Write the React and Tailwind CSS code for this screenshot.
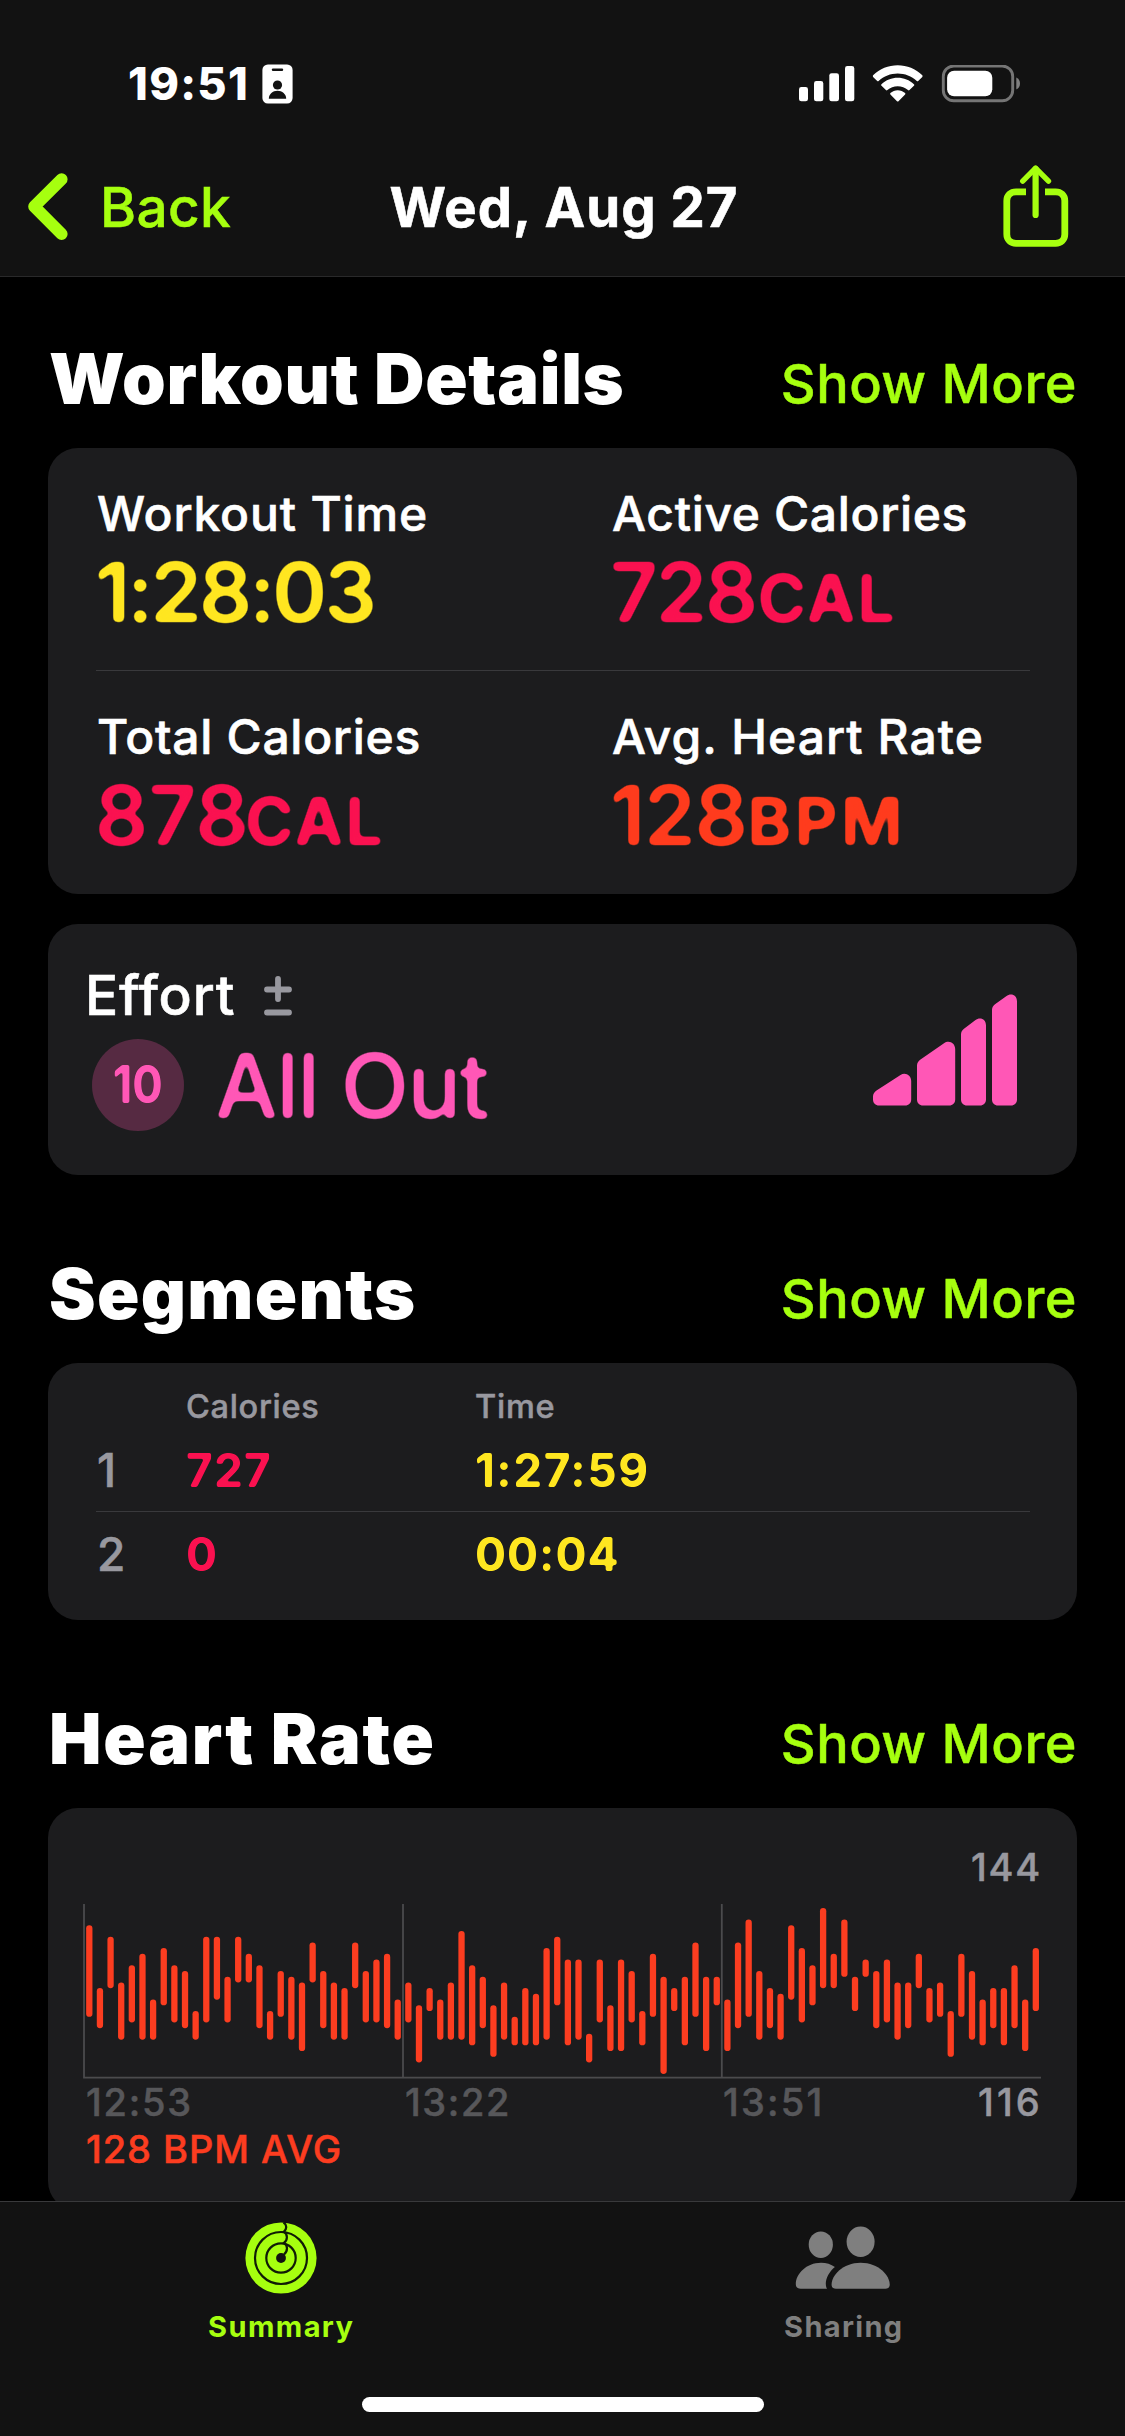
import React from "react";

const LIME = "#a6ff0f";

// Heart-rate samples as [top, bottom] steps below the 144 BPM gridline.
const SAMPLES = [
  [0, 16], [11, 18], [2, 11], [10, 20], [7, 17], [5, 20], [13, 20], [4, 14], [7, 17], [8, 18],
  [15, 20], [2, 17], [2, 13], [9, 17], [2, 10], [5, 10], [7, 18], [15, 20], [8, 16], [9, 20],
  [10, 22], [3, 10], [8, 18], [10, 20], [11, 20], [3, 11], [8, 17], [6, 17], [5, 18], [13, 20],
  [10, 17], [14, 24], [11, 15], [13, 20], [10, 20], [1, 20], [7, 21], [9, 18], [14, 23], [10, 20],
  [16, 21], [11, 21], [12, 21], [4, 20], [2, 14], [6, 21], [6, 20], [19, 24], [6, 17], [14, 22],
  [6, 22], [8, 17], [15, 21], [5, 16], [9, 26], [11, 15], [9, 21], [3, 16], [9, 22], [9, 14],
  [13, 22], [3, 18], [-1, 16], [8, 20], [11, 18], [12, 20], [0, 13], [4, 17], [7, 14], [-3, 11],
  [5, 11], [-1, 9], [9, 15], [6, 9], [8, 18], [6, 17], [10, 20], [10, 18], [5, 11], [11, 17],
  [10, 16], [15, 23], [5, 16], [8, 20], [13, 21], [11, 18], [11, 21], [7, 18], [13, 22], [4, 15],
];

// Softens glyph corners so that numerals look like a rounded typeface.
function RoundedFilter() {
  return (
    <svg width="0" height="0" className="absolute" aria-hidden="true">
      <filter id="rounded" x="-5%" y="-10%" width="110%" height="120%" colorInterpolationFilters="sRGB">
        <feGaussianBlur stdDeviation="2.4" />
        <feColorMatrix values="1 0 0 0 0  0 1 0 0 0  0 0 1 0 0  0 0 0 5 -1.9" />
      </filter>
      <filter id="rounded-sm" x="-5%" y="-10%" width="110%" height="120%" colorInterpolationFilters="sRGB">
        <feGaussianBlur stdDeviation="1.3" />
        <feColorMatrix values="1 0 0 0 0  0 1 0 0 0  0 0 1 0 0  0 0 0 3.4 -1.15" />
      </filter>
    </svg>
  );
}

function IdBadge() {
  return (
    <svg className="ml-[13px] h-[40px] w-[31px]" viewBox="0 0 31 40">
      <rect x="0.4" y="0.4" width="30.2" height="39.2" rx="5.5" fill="#fff" />
      <rect x="9.8" y="4.6" width="11.4" height="2.4" rx="1.2" fill="#121212" />
      <circle cx="15.5" cy="21" r="4.6" fill="#121212" />
      <path d="M6.8 34.8c0-4.600 4-8 8.700-8s8.700 3.400 8.700 8z" fill="#121212" />
    </svg>
  );
}

function StatusIcons() {
  return (
    <svg className="h-[38px] w-[224px]" viewBox="0 0 224 38" fill="#fff">
      <rect x="0" y="22" width="9" height="14.300" rx="2.400" />
      <rect x="15" y="16" width="9.300" height="20.300" rx="2.400" />
      <rect x="30.300" y="8.200" width="9.700" height="28.100" rx="2.400" />
      <rect x="46" y="1" width="9.300" height="35.300" rx="2.400" />
      <path d="M98.700 0.300c9.300 0 18 3.600 24.600 10 .4.400.4 1.100 0 1.600l-4.100 4.100c-.4.400-1 .4-1.400 0-5.200-4.900-12-7.600-19.100-7.600s-13.900 2.700-19.100 7.600c-.4.400-1 .4-1.400 0l-4.100-4.100c-.4-.5-.4-1.200 0-1.600 6.600-6.400 15.300-10 24.600-10z" />
      <path d="M98.700 12.800c6 0 11.800 2.300 16.200 6.400.5.400.5 1.100 0 1.500l-4.400 4.400c-.4.400-1.100.4-1.500 0-2.800-2.500-6.500-3.900-10.300-3.900s-7.500 1.400-10.300 3.900c-.4.400-1.100.4-1.500 0l-4.400-4.400c-.5-.4-.5-1.100 0-1.500 4.400-4.100 10.200-6.400 16.200-6.400z" />
      <path d="M98.700 25.200c2.800 0 5.400 1 7.400 2.900.4.400.4 1 0 1.400l-6.600 6.700c-.4.400-1.100.4-1.500 0l-6.600-6.700c-.4-.4-.4-1 0-1.400 2-1.900 4.600-2.900 7.300-2.900z" />
      <rect x="144.300" y="1" width="69.400" height="34.800" rx="10.500" fill="none" stroke="#757575" strokeWidth="2.900" />
      <rect x="148.100" y="5.700" width="45.200" height="25.600" rx="7" />
      <path d="M217.300 12.400c2.300.8 3.700 3.300 3.700 6s-1.400 5.200-3.700 6z" fill="#808080" />
    </svg>
  );
}

function BackChevron() {
  return (
    <svg className="h-[68px] w-[42px]" viewBox="0 0 42 68" fill="none" stroke={LIME} strokeWidth="12" strokeLinecap="round" strokeLinejoin="round">
      <path d="M34.600 7.300 7.200 34.600l27.400 27.300" />
    </svg>
  );
}

function ShareIcon() {
  return (
    <svg className="h-[84px] w-[66px]" viewBox="0 0 66 84" fill="none" stroke={LIME}>
      <path d="M23 27.800H13c-5.300 0-9.200 3.600-9.200 9v33.500c0 5.300 3.900 9 9.200 9h39.600c5.300 0 9.200-3.700 9.200-9V36.800c0-5.400-3.900-9-9.200-9H42" strokeWidth="6.800" />
      <path d="M32.600 5v46" strokeWidth="6.200" strokeLinecap="round" />
      <path d="M19.700 17.200 32.600 4.200l12.900 13" strokeWidth="5.400" strokeLinecap="round" strokeLinejoin="round" />
    </svg>
  );
}

function PlusMinus() {
  return (
    <svg className="ml-[29px] h-[42px] w-[28px]" viewBox="0 0 28 42" stroke="#98989f" strokeWidth="5.800" strokeLinecap="round">
      <path d="M14 4v20M3 14.500h22M3 37.500h22" />
    </svg>
  );
}

function EffortBars() {
  return (
    <svg className="h-[112px] w-[145px]" viewBox="0 0 145 112" fill="#ff57b6">
      <path d="M0 105.500v-3c0-2.500 1.300-4.500 3.500-6l24-15.500c4.700-3.200 10.700.2 10.700 6v18.500c0 3.500-2.500 6-6 6H6c-3.500 0-6-2.500-6-6z" />
      <path d="M44 105.500V71.500c0-2.500 1.300-4.600 3.500-6.100L71 49.200c5-3.600 11.200-.4 11.200 6v50.300c0 3.500-2.500 6-6 6H50c-3.500 0-6-2.500-6-6z" />
      <path d="M88 105.500V40.500c0-2.500 1-4.300 3-5.700l11.200-8.500c5-3.800 10.800-1 10.800 5.200v74c0 3.500-2.500 6-6 6H94c-3.500 0-6-2.500-6-6z" />
      <path d="M119 105.500V16c0-2.500 1-4.300 3-5.700l11.200-8c5-3.800 10.800-1 10.800 5.200v98c0 3.500-2.500 6-6 6h-13c-3.500 0-6-2.500-6-6z" />
    </svg>
  );
}

function RingsIcon() {
  return (
    <svg className="h-[72px] w-[72px]" viewBox="0 0 72 72" fill="none">
      <circle cx="36" cy="36" r="35.600" fill={LIME} />
      <g stroke="#101c06" strokeWidth="2.200">
        <circle cx="36" cy="36" r="26" />
        <circle cx="36" cy="36" r="14.700" />
        <path d="M38.500 0.500c3.600 2.200 3.600 6.800.2 9.300 4.200 2.200 4.200 8.300.2 11.200 4.200 2.200 4 8.300 0 11.500" />
      </g>
      <circle cx="36" cy="36" r="4.900" fill="#121212" />
    </svg>
  );
}

function PeopleIcon() {
  return (
    <svg className="-ml-[2px] h-[72px] w-[96px]" viewBox="0 0 96 72" fill="#7f7f7f">
      <ellipse cx="25.800" cy="22.700" rx="12.100" ry="13.200" />
      <ellipse cx="65.600" cy="19.700" rx="14" ry="15.300" />
      <path d="M5.600 66.800C2.600 66.800.8 65 .8 62 .8 52 11.300 40.700 26 40.700c5.400 0 10 1.500 13.900 4.200-5.700 4.800-9.100 11.200-9.100 16.900 0 1.900.4 3.600 1.200 5z" />
      <path d="M41 66.800c-3 0-4.400-1.400-4.400-4.300C36.600 53.500 47.600 40.700 65.700 40.700s29 12.800 29 21.800c0 2.900-1.500 4.300-4.400 4.300z" />
    </svg>
  );
}

function HeartChart() {
  return (
    <svg className="block h-[175px] w-[958px]" viewBox="83 1904 958 175">
      <path d="M84 1904v173.700h957M403 1904v173M721.800 1904v173" fill="none" stroke="#4b4b4d" strokeWidth="1.800" />
      <g stroke="#fc3d20" strokeWidth="6.300" strokeLinecap="round">
        {SAMPLES.map(([top, bottom], i) => {
          const x = 89.300 + i * 10.635;
          return <line key={i} x1={x} x2={x} y1={1928.400 + top * 5.715} y2={1922.200 + bottom * 5.715} />;
        })}
      </g>
    </svg>
  );
}

function SectionHeading({ children, className }) {
  return (
    <div className="flex items-baseline justify-between pt-[83.5px] pb-[34.5px] leading-none">
      <h2 className={"text-[70px] font-black leading-none text-white " + className}>{children}</h2>
      <a className="-mt-px mb-px self-end pb-[1.5px] text-[54px] font-medium leading-none tracking-[0.5px] text-[#a6ff0f] [-webkit-text-stroke:0.5px]">Show More</a>
    </div>
  );
}

function Metric({ label, labelClass, color, value, valueClass, unit, unitClass }) {
  return (
    <div className={"pt-[42px] " + color}>
      <div className={"text-[48px] font-medium leading-none text-white [-webkit-text-stroke:0.6px] " + labelClass}>{label}</div>
      <div className="mt-[13px] flex items-baseline leading-none [filter:url(#rounded)]">
        <span className={"text-[83px] font-semibold leading-none " + valueClass}>{value}</span>
        {unit && <span className={"text-[66px] font-bold leading-none " + unitClass}>{unit}</span>}
      </div>
    </div>
  );
}

export default function App() {
  return (
    <div className="flex h-[2436px] w-[1125px] flex-col overflow-hidden bg-black font-['Inter',sans-serif] whitespace-nowrap">
      <RoundedFilter />
      <header className="h-[277px] shrink-0 border-b border-[#29292a] bg-[#121212]">
        <div className="mt-[61px] flex h-[45px] items-center justify-between pr-[102px] pl-[128px]">
          <div className="flex items-center text-[45px] font-extrabold leading-none text-white">
            <span className="tracking-[1.29px]">19:51</span>
            <IdBadge />
          </div>
          <StatusIcons />
        </div>
        <div className="mt-[58px] grid h-[84px] grid-cols-[1fr_auto_1fr] items-center pr-[56px] pl-[27px]">
          <a className="flex items-center">
            <BackChevron />
            <span className="ml-[31px] pt-[2px] text-[55px] font-medium leading-none tracking-[0.3px] text-[#a6ff0f] [-webkit-text-stroke:0.5px]">Back</span>
          </a>
          <h1 className="ml-[32px] pt-[2px] text-[54.5px] font-bold leading-none tracking-[1px] text-white [-webkit-text-stroke:0.6px]">Wed, Aug 27</h1>
          <button className="justify-self-end">
            <ShareIcon />
          </button>
        </div>
      </header>

      <main className="min-h-0 flex-1 overflow-hidden px-[48px]">
        <div className="-mt-[17px]">
          <SectionHeading className="pl-px tracking-[0.68px]">Workout Details</SectionHeading>
        </div>
        <section className="h-[446px] rounded-[30px] bg-[#1c1c1e] pr-[47px] pl-[48px]">
          <div className="grid grid-cols-[515px_1fr] border-b border-[#39393c] pb-[35.5px] pl-px">
            <Metric label="Workout Time" labelClass="tracking-[0.83px]" color="text-[#ffe620]" value="1:28:03" valueClass="-ml-[2px] tracking-[-3.1px]" />
            <Metric label="Active Calories" labelClass="tracking-[0.65px]" color="text-[#fa1150]" value="728" valueClass="-ml-[2px] tracking-[-2.3px]" unit="CAL" unitClass="ml-[2px] tracking-[1.7px]" />
          </div>
          <div className="grid grid-cols-[515px_1fr] pl-px">
            <Metric label="Total Calories" labelClass="tracking-[0.7px]" color="text-[#fa1150]" value="878" valueClass="-ml-[2px] tracking-[0.3px]" unit="CAL" unitClass="-ml-[3.5px] tracking-[2px]" />
            <Metric label="Avg. Heart Rate" labelClass="tracking-[1.03px]" color="text-[#ff3b1d]" value="128" valueClass="-ml-[2px] tracking-[-1px]" unit="BPM" unitClass="ml-[0.5px] tracking-[3.6px]" />
          </div>
        </section>

        <section className="mt-[30px] flex h-[251px] items-center justify-between rounded-[30px] bg-[#1c1c1e] pr-[59px] pl-[36px]">
          <div className="h-full pt-[44px]">
            <div className="flex items-center pl-px">
              <span className="text-[55px] font-medium leading-none tracking-[0.8px] text-white [-webkit-text-stroke:0.6px]">Effort</span>
              <PlusMinus />
            </div>
            <div className="mt-[16px] flex h-[92px] items-center text-[#ff57b6]">
              <div className="ml-[8px] flex h-[92px] w-[92px] items-center justify-center rounded-full bg-[#562a42]">
                <span className="scale-x-[0.87] text-[52px] font-bold leading-none [filter:url(#rounded-sm)]">10</span>
              </div>
              <span className="ml-[31px] text-[89px] font-medium leading-none tracking-[-1.5px] [filter:url(#rounded)]">All Out</span>
            </div>
          </div>
          <EffortBars />
        </section>

        <SectionHeading className="pl-px tracking-[1.3px]">Segments</SectionHeading>
        <section className="h-[257px] rounded-[30px] bg-[#1c1c1e] pt-[28px] pr-[47px] pl-[48px] leading-none">
          <div className="grid grid-cols-[90px_289px_1fr] text-[32.5px] font-medium leading-none text-[#98989f] [-webkit-text-stroke:0.5px]">
            <span className="col-start-2 tracking-[0.7px]">Calories</span>
            <span className="tracking-[0.78px]">Time</span>
          </div>
          <div className="mt-[23px] grid grid-cols-[90px_289px_1fr] border-b border-[#39393c] pb-[18.5px] text-[46px] font-bold leading-none">
            <span className="pl-px font-medium text-[#98989f] [-webkit-text-stroke:0.6px]">1</span>
            <span className="tracking-[1.14px] text-[#fa1150] [filter:url(#rounded-sm)]">727</span>
            <span className="tracking-[1.5px] text-[#ffe620] [filter:url(#rounded-sm)]">1:27:59</span>
          </div>
          <div className="mt-[19px] grid grid-cols-[90px_289px_1fr] text-[46px] font-bold leading-none">
            <span className="pl-px font-medium text-[#98989f] [-webkit-text-stroke:0.6px]">2</span>
            <span className="text-[#fa1150] [filter:url(#rounded-sm)]">0</span>
            <span className="tracking-[1.02px] text-[#ffe620] [filter:url(#rounded-sm)]">00:04</span>
          </div>
        </section>

        <SectionHeading className="pl-px tracking-[1.75px]">Heart Rate</SectionHeading>
        <section className="h-[403px] rounded-[30px] bg-[#1c1c1e] px-[35px] pt-[40px] text-[38px] font-medium leading-none [-webkit-text-stroke:0.5px]">
          <div className="text-right tracking-[1.8px] text-[#98989f]">144</div>
          <div className="mt-[18px]">
            <HeartChart />
          </div>
          <div className="mt-[4px] grid grid-cols-[319px_318px_1fr_auto] pl-[3px] text-[#57575a]">
            <span className="tracking-[1.77px]">12:53</span>
            <span className="tracking-[1.6px]">13:22</span>
            <span className="tracking-[2.2px]">13:51</span>
            <span className="-mr-px tracking-[3.2px] text-[#98989f]">116</span>
          </div>
          <div className="mt-[9px] pl-[3px] tracking-[0.95px] text-[#fc3d20]">128 BPM AVG</div>
        </section>
      </main>

      <footer className="h-[235px] shrink-0 border-t border-[#39393b] bg-[#121212]">
        <nav className="grid grid-cols-2 pt-[20px] text-[29px] font-bold leading-none">
          <a className="flex flex-col items-center gap-[18px] tracking-[1.39px] text-[#a6ff0f]">
            <RingsIcon />
            <span>Summary</span>
          </a>
          <a className="flex flex-col items-center gap-[18px] tracking-[1.31px] text-[#7f7f7f]">
            <PeopleIcon />
            <span>Sharing</span>
          </a>
        </nav>
        <div className="mx-auto mt-[56px] h-[15px] w-[402px] rounded-full bg-white" />
      </footer>
    </div>
  );
}
